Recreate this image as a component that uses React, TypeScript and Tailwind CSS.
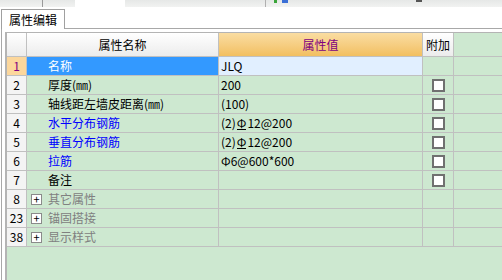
import React from "react";

type Row = {
  n: string;
  name: string;
  value?: React.ReactNode;
  selected?: boolean;
  blue?: boolean;
  check?: boolean;
  group?: boolean;
};

const Rebar = () => (
  <span className="inline-block border-b border-black leading-[12px] mx-[1px]">Φ</span>
);

const rows: Row[] = [
  { n: "1", name: "名称", value: "JLQ", selected: true },
  { n: "2", name: "厚度(㎜)", value: "200", check: true },
  { n: "3", name: "轴线距左墙皮距离(㎜)", value: "(100)", check: true },
  {
    n: "4",
    name: "水平分布钢筋",
    value: (
      <>
        (2)
        <Rebar />
        12@200
      </>
    ),
    blue: true,
    check: true,
  },
  {
    n: "5",
    name: "垂直分布钢筋",
    value: (
      <>
        (2)
        <Rebar />
        12@200
      </>
    ),
    blue: true,
    check: true,
  },
  { n: "6", name: "拉筋", value: "Φ6@600*600", blue: true, check: true },
  { n: "7", name: "备注", value: "", check: true },
  { n: "8", name: "其它属性", group: true },
  { n: "23", name: "锚固搭接", group: true },
  { n: "38", name: "显示样式", group: true },
];

const line = "border-[#c0c0c0]";

export default function App() {
  return (
    <div className="w-[502px] h-[280px] bg-white overflow-hidden flex flex-col font-['Noto_Sans_CJK_SC','Noto_Sans',sans-serif] text-[12px] text-black">
      {/* toolbar remnant */}
      <div className="h-[7px] shrink-0 bg-gradient-to-b from-[#e6e8e7] to-[#f1f2f1] flex items-start">
        <div className="w-[42px]" />
        <div className="w-[1px] h-[7px] bg-[#9a9a9a]" />
        <div className="w-[32px]" />
        <div className="w-[50px] h-[7px] bg-white" />
        <div className="w-[140px]" />
        <div className="w-[1px] h-[7px] bg-[#b0b0b0]" />
        <div className="w-[8px]" />
        <div className="w-[3px] h-[3px] bg-[#3aa53a]" />
        <div className="w-[5px]" />
        <div className="w-[6px] h-[3px] bg-[#3b6fd6]" />
        <div className="w-[128px]" />
        <div className="w-[6px] h-[2px] bg-[#555]" />
      </div>

      {/* tab strip */}
      <div className="h-[22px] shrink-0 flex items-end">
        <div className="w-[1px] shrink-0" />
        <div className="w-[64px] h-[20px] border-l border-t border-r border-[#a0a0a0] bg-white flex items-center pl-[7px]">
          属性编辑
        </div>
        <div className="flex-1 h-[1px] bg-[#a8a8a8]" />
      </div>

      {/* panel */}
      <div className="flex-1 ml-[1px] border-l border-[#a8a8a8] pl-[3px] pt-[3px] flex flex-col">
        <div className="flex-1 border-l-2 border-t border-[#b4b4b4] bg-[#cde8d0]">
          {/* header */}
          <div className={`flex h-[24px] border-b ${line}`}>
            <div className={`w-[20px] border-r ${line} bg-gradient-to-b from-white to-[#ececec]`} />
            <div className={`w-[192px] border-r ${line} bg-gradient-to-b from-white to-[#ececec] flex items-center justify-center`}>
              属性名称
            </div>
            <div className={`w-[204px] border-r ${line} bg-gradient-to-b from-[#fadda2] to-[#f2bf60] flex items-center justify-center text-[#800080]`}>
              属性值
            </div>
            <div className={`w-[31px] border-r ${line} bg-gradient-to-b from-white to-[#ececec] flex items-center justify-center`}>
              附加
            </div>
          </div>

          {rows.map((r) => (
            <div key={r.n} className={`flex h-[19px] border-b ${line}`}>
              <div
                className={`w-[20px] border-r ${line} flex items-center justify-center ${
                  r.selected ? "bg-[#fcd79c] text-[#800080]" : "bg-[#f4f4f4]"
                }`}
              >
                {r.n}
              </div>
              <div
                className={`w-[192px] border-r ${line} flex items-center whitespace-nowrap ${
                  r.selected ? "bg-[#3399ff] text-white" : ""
                } ${r.blue ? "text-[#0000ff]" : ""} ${r.group ? "text-[#808080] pl-[4px]" : "pl-[21px]"}`}
              >
                {r.group && (
                  <span className="w-[11px] h-[11px] border border-[#8a8a8a] bg-white mr-[6px] flex items-center justify-center text-black text-[11px] leading-none">
                    +
                  </span>
                )}
                {r.name}
              </div>
              <div
                className={`w-[204px] border-r ${line} flex items-center pl-[2px] whitespace-nowrap ${
                  r.selected ? "bg-[#e1efff]" : ""
                }`}
              >
                {r.value}
              </div>
              <div className={`w-[31px] border-r ${line} flex items-center justify-center`}>
                {r.check && <span className="w-[13px] h-[13px] border-2 border-[#707070] bg-white" />}
              </div>
            </div>
          ))}
        </div>
      </div>
    </div>
  );
}
